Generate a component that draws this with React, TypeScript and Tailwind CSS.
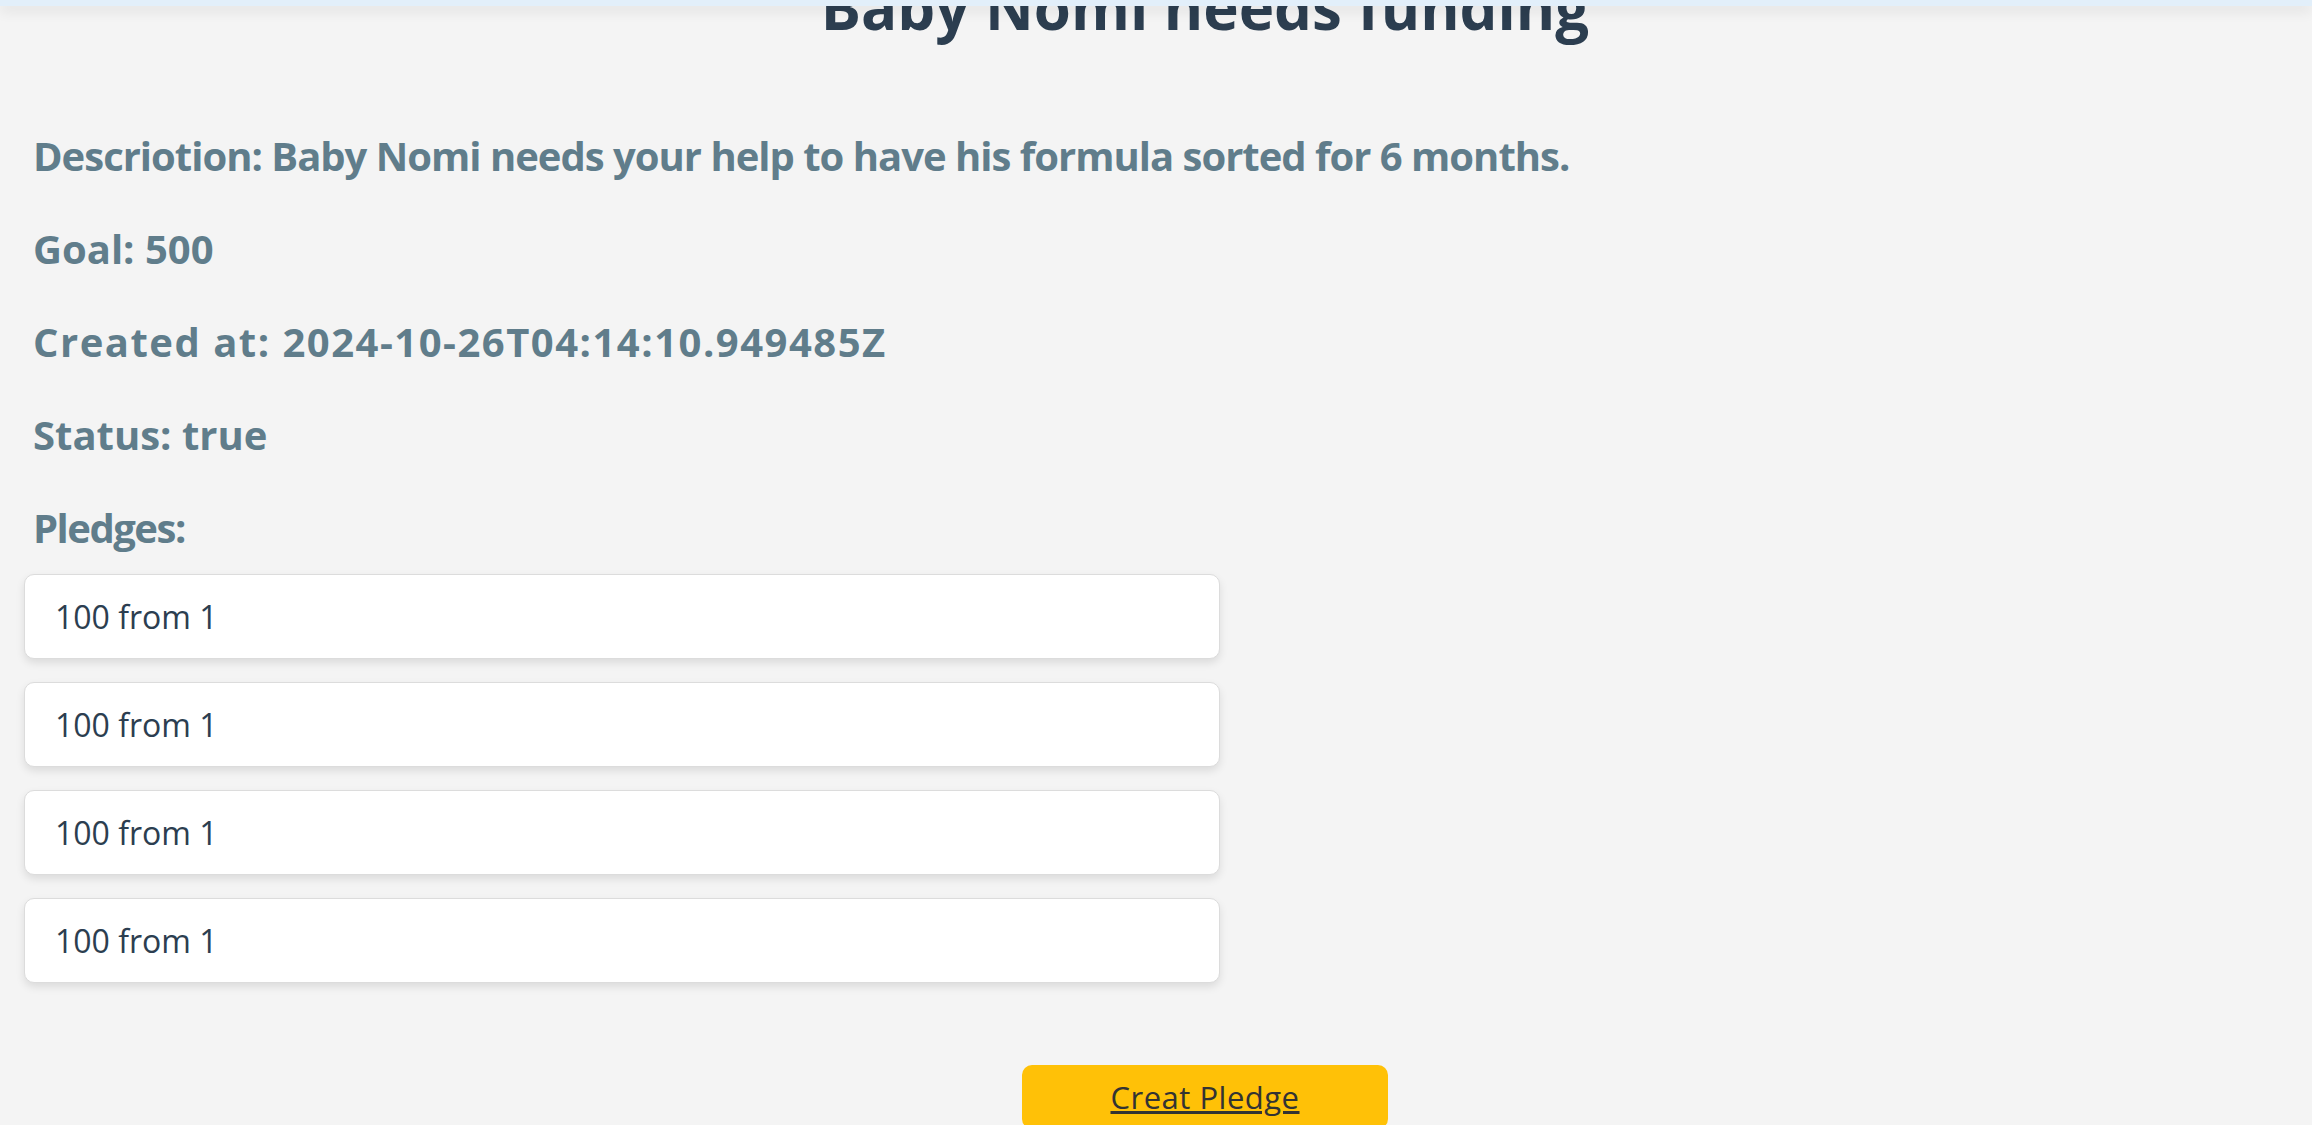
import React from 'react';

const pledges = [
  { amount: 100, supporter: 1 },
  { amount: 100, supporter: 1 },
  { amount: 100, supporter: 1 },
  { amount: 100, supporter: 1 },
];

export default function App() {
  return (
    <div className="min-h-screen overflow-hidden bg-[#f4f4f4] font-['Comic_Sans_MS','Open_Sans',sans-serif]">
      {/* Nav (scrolled, only its bottom edge shows) */}
      <div className="relative z-10 h-[6px] bg-[#e2effa] shadow-[0_4px_14px_rgba(0,0,0,0.12)]" />

      {/* Title */}
      <h1 className="-mt-[29px] pl-[98px] text-center text-[60px] font-bold leading-[60px] text-[#2c3e50]">
        Baby Nomi needs funding
      </h1>

      {/* Details */}
      <div className="mt-[72px] pl-[33px] text-[40px] font-bold leading-[93px] text-[#607d8b]">
        <p className="tracking-[-1px]">
          Descriotion: Baby Nomi needs your help to have his formula sorted for 6 months.
        </p>
        <p>Goal: 500</p>
        <p className="tracking-[1.5px]">Created at: 2024-10-26T04:14:10.949485Z</p>
        <p>Status: true</p>
        <p className="tracking-[-1.5px]">Pledges:</p>
      </div>

      {/* Pledge list */}
      <ul className="ml-[24px] flex w-[1196px] flex-col gap-[23px]">
        {pledges.map((p, i) => (
          <li
            key={i}
            className="flex h-[85px] items-center rounded-[10px] border border-[#dcdcdc] bg-white pl-[30px] text-[32px] text-[#2c3e50] shadow-[0_4px_8px_rgba(0,0,0,0.1)]"
          >
            {p.amount} from {p.supporter}
          </li>
        ))}
      </ul>

      {/* Create pledge */}
      <div className="mt-[82px] flex justify-center pl-[98px]">
        <button className="flex h-[64px] w-[366px] items-center justify-center rounded-[10px] bg-[#ffc107] text-[31px] tracking-[0.5px] text-[#333] underline">
          Creat Pledge
        </button>
      </div>
    </div>
  );
}
